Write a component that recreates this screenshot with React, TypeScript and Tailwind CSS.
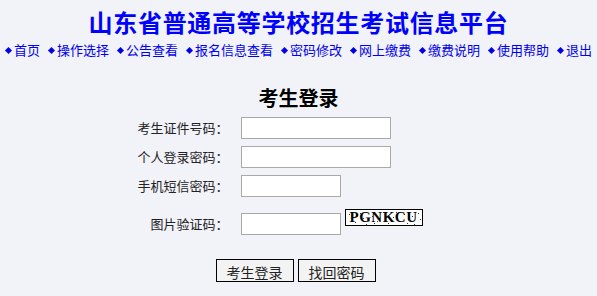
import React from "react";

const NAV = ["首页", "操作选择", "公告查看", "报名信息查看", "密码修改", "网上缴费", "缴费说明", "使用帮助", "退出"];

const FONT = { fontFamily: '"Noto Sans CJK SC", "Noto Sans", sans-serif' };

// noise dots over the captcha text
const DOTS: [number, number][] = [
  [3, 4], [9, 12], [14, 3], [20, 14], [26, 6], [31, 11], [37, 2], [42, 13], [47, 7],
  [53, 15], [58, 4], [63, 10], [68, 14], [72, 3], [5, 15], [17, 8], [34, 15], [50, 2],
  [61, 13], [74, 9], [11, 6], [28, 13], [45, 9], [66, 6],
];

function Field({ wide = true }: { wide?: boolean }) {
  return (
    <input
      type="text"
      className={`h-[22px] border border-[#a9a9a9] bg-white outline-none ${wide ? "w-[150px]" : "w-[100px]"}`}
    />
  );
}

export default function App() {
  return (
    <div className="min-h-screen bg-[#f2f3f9] text-[#222]" style={FONT}>
      <header className="flex flex-col items-center pt-[6px]">
        <h1 className="text-[24px] font-bold leading-[32px] tracking-[0.7px] text-[#0000ff]">山东省普通高等学校招生考试信息平台</h1>
        <nav className="mt-[3px] flex w-full justify-between px-[5px] text-[13px] leading-[18px] text-[#0000ee]">
          {NAV.map((item) => (
            <a key={item} href="#" className="flex items-center gap-[2px]">
              <span className="mx-[1px] h-[5px] w-[5px] rotate-45 bg-[#0000ee]" />
              {item}
            </a>
          ))}
        </nav>
      </header>

      <main className="mt-[27px] flex flex-col items-center">
        <h2 className="text-[20px] font-bold leading-[24px] text-black">考生登录</h2>
        <div className="mt-[7px] grid w-[400px] grid-cols-[130px_1fr] items-center gap-x-[12px] gap-y-[7px] text-[13px]">
          <label className="text-right">考生证件号码：</label>
          <Field />
          <label className="text-right">个人登录密码：</label>
          <Field />
          <label className="text-right">手机短信密码：</label>
          <Field wide={false} />
          <label className="mt-[9px] text-right">图片验证码：</label>
          <div className="mt-[9px] flex items-start gap-[4px]">
            <Field wide={false} />
            <span className="relative -mt-[4px] flex h-[17px] w-[78px] items-center justify-center overflow-hidden border border-black bg-white text-[15px] font-bold leading-none tracking-[0.5px] text-black" style={{ fontFamily: '"Liberation Serif", serif' }}>
              PGNKCU
              <svg className="absolute inset-0" width="78" height="17" viewBox="0 0 78 17" aria-hidden="true">
                {DOTS.map(([x, y], i) => (
                  <rect key={i} x={x} y={y} width="1" height="1" fill="#333" />
                ))}
              </svg>
            </span>
          </div>
        </div>
        <div className="ml-[-6px] mt-[24px] flex gap-[4px] text-[14px]">
          <button type="button" className="h-[23px] w-[78px] border border-black bg-[#f3f3f3] pt-[2px] leading-[18px]">考生登录</button>
          <button type="button" className="h-[23px] w-[78px] border border-black bg-[#f3f3f3] pt-[2px] leading-[18px]">找回密码</button>
        </div>
      </main>
    </div>
  );
}
